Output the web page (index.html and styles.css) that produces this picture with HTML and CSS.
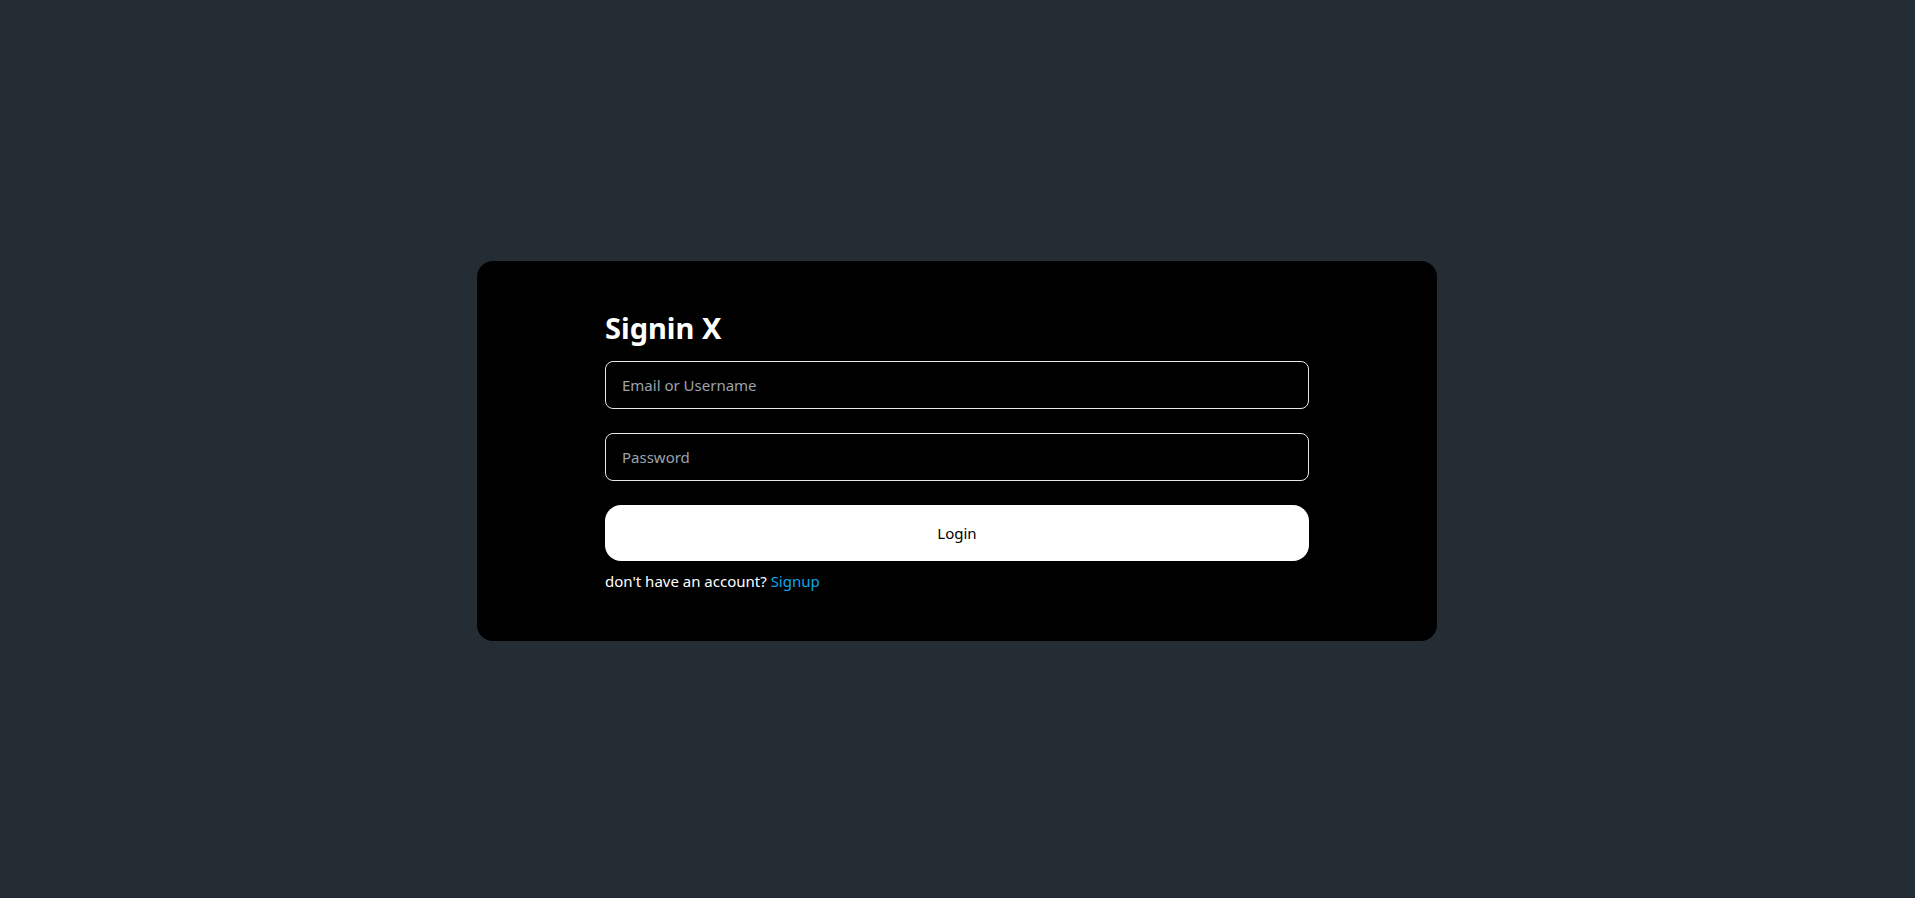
FILE: index.html
```html
<!DOCTYPE html>
<html lang="en">
<head>
  <meta charset="utf-8">
  <meta name="viewport" content="width=device-width, initial-scale=1">
  <title>Signin X</title>
  <link rel="stylesheet" href="styles.css">
</head>
<body>
  <main class="page">
    <section class="card">
      <h1 class="title">Signin X</h1>
      <form class="form">
        <input class="field" type="text" name="login" placeholder="Email or Username" aria-label="Email or Username" autocomplete="username">
        <input class="field" type="password" name="password" placeholder="Password" aria-label="Password" autocomplete="current-password">
        <button class="submit" type="submit">Login</button>
      </form>
      <p class="signup">don't have an account? <a class="signup-link" href="#signup">Signup</a></p>
    </section>
  </main>
</body>
</html>
```

FILE: styles.css
```css
*,
*::before,
*::after {
  box-sizing: border-box;
}

body {
  margin: 0;
  background: #242d34;
  color: #ffffff;
  font-family: "Segoe UI", "Noto Sans", sans-serif;
  font-size: 15px;
  line-height: 24px;
}

.page {
  display: flex;
  align-items: center;
  justify-content: center;
  min-height: 100vh;
  padding: 20px 17px 16px 16px;
  border-bottom: 1px solid #242730;
}

.card {
  width: 100%;
  max-width: 960px;
  padding: 48px clamp(24px, 8vw, 128px);
  border-radius: 16px;
  background: #000000;
}

.title {
  margin: 0 0 14px;
  font-size: 29px;
  font-weight: 700;
  line-height: 38px;
}

.form {
  display: flex;
  flex-direction: column;
  gap: 24px;
}

.field {
  width: 100%;
  height: 48px;
  padding: 0 16px;
  border: 1px solid #e5e7eb;
  border-radius: 8px;
  background: transparent;
  color: inherit;
  font: inherit;
}

.field::placeholder {
  color: #9ca3af;
  opacity: 1;
}

.submit {
  height: 56px;
  padding: 0 16px;
  border: 0;
  border-radius: 16px;
  background: #ffffff;
  color: #000000;
  font: inherit;
  cursor: pointer;
}

.signup {
  margin: 8px 0 0;
}

.signup-link {
  color: #0ea5e9;
  text-decoration: none;
}
```
